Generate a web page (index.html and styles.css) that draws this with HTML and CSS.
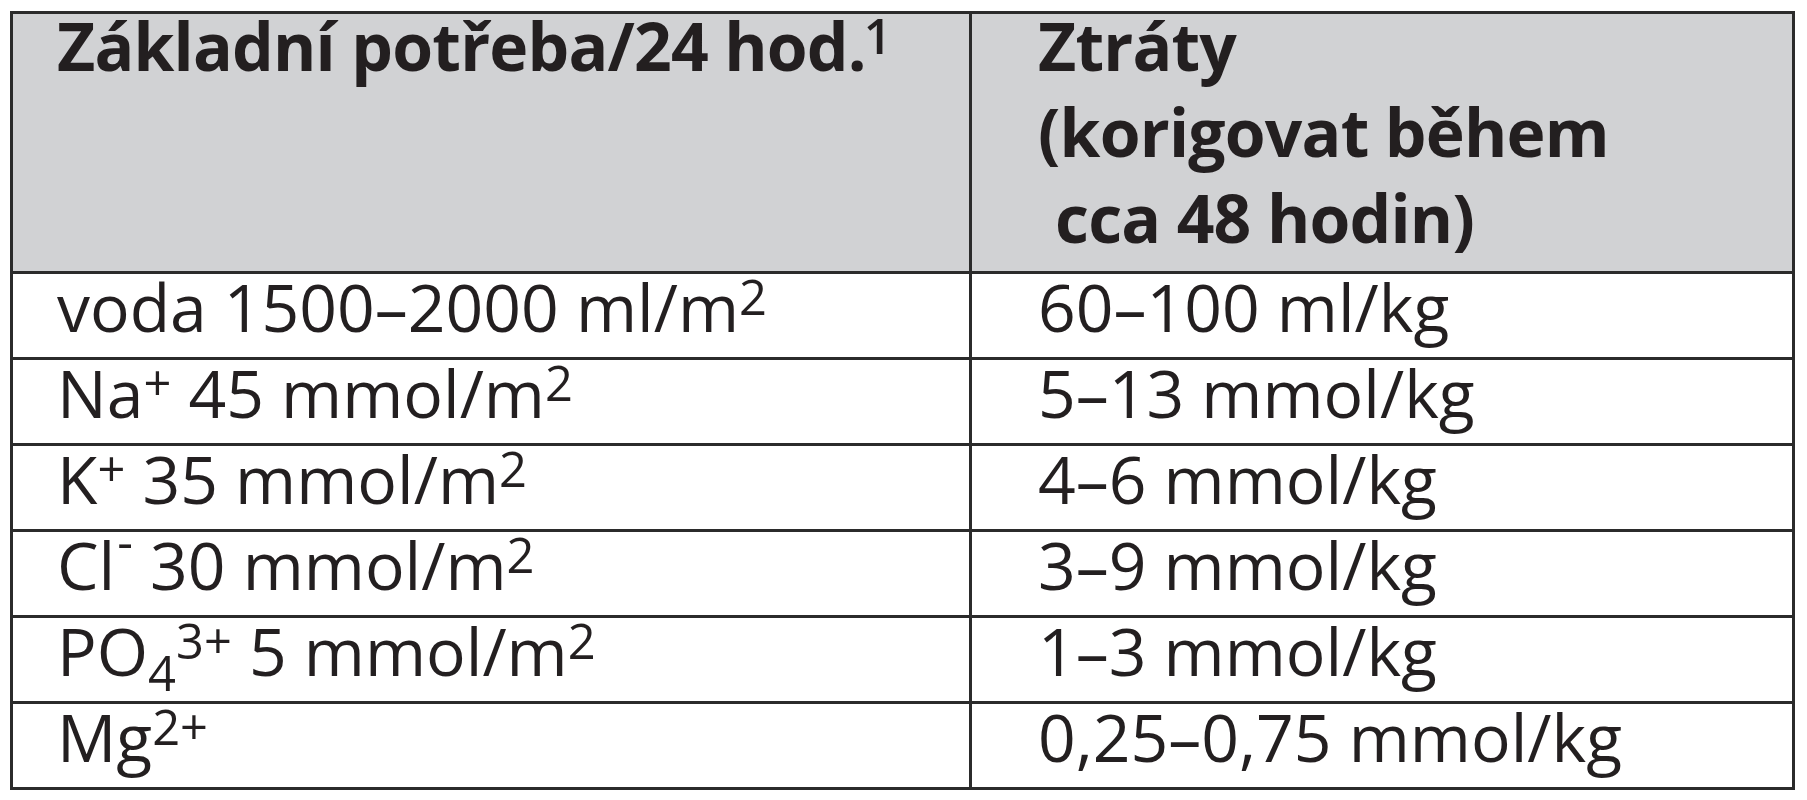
FILE: index.html
```html
<!DOCTYPE html>
<html lang="cs">
<head>
<meta charset="utf-8">
<title>Základní potřeba</title>
<link rel="stylesheet" href="styles.css">
</head>
<body>
<table class="tbl">
  <thead>
    <tr>
      <th class="c1"><div class="hd">Základní potřeba/24 hod.<span class="sup one">1</span></div></th>
      <th class="c2"><div class="hd">Ztráty<br>(korigovat během<br><span class="ind">cca 48 hodin)</span></div></th>
    </tr>
  </thead>
  <tbody>
    <tr><td class="c1">voda 1500–2000 ml/m<span class="sup">2</span></td><td class="c2">60–100 ml/kg</td></tr>
    <tr><td class="c1">Na<span class="sup">+</span> 45 mmol/m<span class="sup">2</span></td><td class="c2">5–13 mmol/kg</td></tr>
    <tr><td class="c1">K<span class="sup">+</span> 35 mmol/m<span class="sup">2</span></td><td class="c2">4–6 mmol/kg</td></tr>
    <tr><td class="c1">Cl<span class="minus">-</span> 30 mmol/m<span class="sup">2</span></td><td class="c2">3–9 mmol/kg</td></tr>
    <tr><td class="c1">PO<span class="sub">4</span><span class="sup">3+</span> 5 mmol/m<span class="sup">2</span></td><td class="c2">1–3 mmol/kg</td></tr>
    <tr><td class="c1">Mg<span class="sup">2+</span></td><td class="c2">0,25–0,75 mmol/kg</td></tr>
  </tbody>
</table>
</body>
</html>
```
FILE: styles.css
```css
html, body {
  margin: 0;
  padding: 0;
  background: #ffffff;
}

body {
  font-family: "Open Sans", "Liberation Sans", sans-serif;
  color: #231f20;
}

.tbl {
  box-sizing: border-box;
  margin: 11px 0 0 10px;
  width: 1785px;
  border: 3px solid #2b2b2b;
  border-spacing: 0;
  table-layout: fixed;
  font-size: 66px;
}

.tbl th,
.tbl td {
  box-sizing: border-box;
  text-align: left;
  vertical-align: top;
  white-space: nowrap;
  padding: 0 0 19px 44px;
  line-height: 64px;
  font-weight: 400;
}

.tbl th {
  background: #d1d2d4;
  font-weight: 700;
  line-height: 86px;
  padding-bottom: 11px;
  letter-spacing: -0.8px;
}

.hd {
  margin-top: -12px;
}

.tbl td {
  border-top: 3px solid #2b2b2b;
}

.tbl .c1 {
  width: 956px;
}

.tbl .c2 {
  border-left: 3px solid #2b2b2b;
  padding-left: 66px;
}

.ind {
  padding-left: 17px;
}

.sup {
  font-size: 0.74em;
  vertical-align: 17px;
  line-height: 0;
}

.one {
  margin-left: -2px;
  font-weight: 600;
}

.sub {
  font-size: 0.74em;
  vertical-align: -15px;
  line-height: 0;
}

.minus {
  font-size: 0.74em;
  vertical-align: 30px;
  line-height: 0;
  margin-left: 2px;
}
```
